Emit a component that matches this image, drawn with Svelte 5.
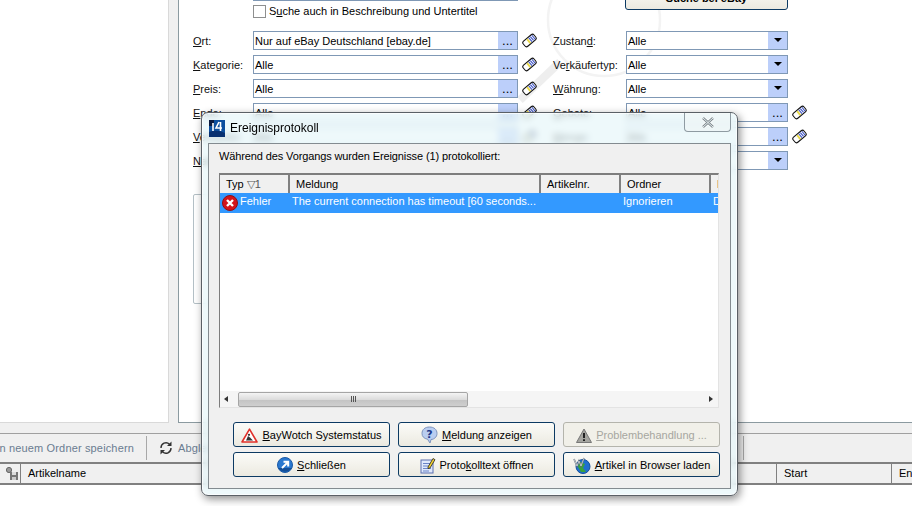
<script>
  // form rows: label split around the underlined access key
  const rows = [
    { l: ["", "O", "rt:"], v: "Nur auf eBay Deutschland [ebay.de]", r: ["Zustan", "d", ":"], rv: "Alle", rt: "drop" },
    { l: ["", "K", "ategorie:"], v: "Alle", r: ["Ve", "r", "käufertyp:"], rv: "Alle", rt: "drop" },
    { l: ["", "P", "reis:"], v: "Alle", r: ["", "W", "ährung:"], rv: "Alle", rt: "drop" },
    { l: ["", "E", "nde:"], v: "Alle", r: ["", "G", "ebote:"], rv: "Alle", rt: "more" },
    { l: ["", "V", "erkäufer:"], v: "Alle", r: ["", "M", "enge:"], rv: "Alle", rt: "more" },
    { l: ["", "N", "ame:"], v: "Alle", r: ["", "S", "tatus:"], rv: "Alle", rt: "drop" }
  ];

  const columns = [
    { name: "Typ", w: 70 },
    { name: "Meldung", w: 251 },
    { name: "Artikelnr.", w: 80 },
    { name: "Ordner", w: 90 },
    { name: "Datei", w: 40 }
  ];
</script>

{#snippet eraser()}
  <svg class="eraser" width="15" height="15" viewBox="0 0 15 15">
    <g transform="rotate(-40 7.5 7.5)">
      <rect x="0.5" y="4.2" width="14" height="6.6" rx="2" fill="#fff" stroke="#111" stroke-width="1.1" />
      <rect x="5.5" y="5" width="2" height="5" fill="#e8d84a" />
      <path d="M8.7 5 V10 M10.7 5 V10 M12.7 5 V10" stroke="#3f55c8" stroke-width="1.1" />
    </g>
  </svg>
{/snippet}

{#snippet key(parts)}
  <span class="lbl">{parts[0]}<u>{parts[1]}</u>{parts[2]}</span>
{/snippet}

{#snippet field(value, type)}
  <div class="field">
    <span class="val">{value}</span>
    {#if type === "more"}
      <span class="side dots">...</span>
    {:else}
      <span class="side"><i class="tri"></i></span>
    {/if}
  </div>
{/snippet}

<div class="page">
  <div class="top">
    <div class="leftpane"></div>
    <div class="main">
      <svg class="swirl" width="180" height="110" viewBox="0 0 180 110">
        <circle cx="95" cy="20" r="56" fill="none" stroke="#f3f3f3" stroke-width="2.5" />
        <path d="M11 100 L51 62" stroke="#eeeeee" stroke-width="8" />
      </svg>
      <div class="head">
        <div class="headleft">
          <div class="field topfield"></div>
          <label class="check"><span class="box"></span><span>S<u>u</u>che auch in Beschreibung und Untertitel</span></label>
        </div>
        <button class="btn searchbtn"><b>Suche bei eBay</b></button>
      </div>
      <div class="form">
        {#each rows as row}
          {@render key(row.l)}
          {@render field(row.v, "more")}
          <div class="mid">{@render eraser()}</div>
          {@render key(row.r)}
          {@render field(row.rv, row.rt)}
          <div class="end">{#if row.rt === "more"}{@render eraser()}{/if}</div>
        {/each}
      </div>
      <div class="group"></div>
    </div>
  </div>

  <div class="strip"></div>

  <div class="toolbar">
    <div class="first"><span class="tool">Suche in neuem Ordner speichern</span></div>
    <span class="sep"></span>
    <svg class="sync" width="16" height="16" viewBox="0 0 16 16">
      <path d="M3 8 A5 5 0 0 1 11.5 4.2" fill="none" stroke="#333" stroke-width="1.4" />
      <path d="M13 8 A5 5 0 0 1 4.5 11.8" fill="none" stroke="#333" stroke-width="1.4" />
      <path d="M13.5 1.5 L13.5 6 L9 6 Z" fill="#333" />
      <path d="M2.5 14.5 L2.5 10 L7 10 Z" fill="#333" />
    </svg>
    <span class="tool">Abgleich</span>
    <span class="grow"></span>
    <span class="sep"></span>
    <span class="tailgap"></span>
  </div>

  <div class="listhead">
    <div class="hc iconcell">
      <svg width="14" height="15" viewBox="0 0 14 15">
        <circle cx="4" cy="4" r="2.6" fill="#9a9a9a" stroke="#666" />
        <rect x="5" y="6" width="8" height="8" fill="#777" />
        <rect x="7" y="6" width="4" height="3" fill="#ddd" />
        <rect x="7" y="11" width="4" height="3" fill="#ccc" />
      </svg>
    </div>
    <div class="hc namecell">Artikelname</div>
    <div class="hc startcell">Start</div>
    <div class="hc">Ende</div>
  </div>

  <div class="dialog">
    <div class="titlebar">
      <svg class="appicon" width="16" height="17" viewBox="0 0 16 17">
        <rect width="16" height="17" fill="#0d4f9e" />
        <path d="M0 17 L0 12 Q8 9 16 13 L16 17 Z" fill="#083070" />
        <path d="M0 0 H5 V6 H0 Z" fill="#0a1a40" />
        <path d="M4 3 V11 M10 2 L7 8 H13 M11.5 2 V11" stroke="#fff" stroke-width="1.6" fill="none" />
      </svg>
      <span class="title">Ereignisprotokoll</span>
      <span class="close">
        <svg width="14" height="11" viewBox="0 0 14 11">
          <path d="M2 1 L12 10 M12 1 L2 10" stroke="#fff" stroke-width="4" />
          <path d="M2 1 L12 10 M12 1 L2 10" stroke="#7f8b90" stroke-width="2.6" />
          <path d="M2 1 L12 10 M12 1 L2 10" stroke="#e6ecee" stroke-width="1" />
        </svg>
      </span>
    </div>
    <div class="panel">
      <p class="msg">Während des Vorgangs wurden Ereignisse (1) protokolliert:</p>
      <div class="list">
        <div class="lhead">
          {#each columns as c, i}
            <div class="lh" style="width:{c.w}px">
              {c.name}{#if i === 0}<span class="sort">▽1</span>{/if}
            </div>
          {/each}
        </div>
        <div class="lrow">
          <div class="lc" style="width:70px">
            <svg width="16" height="16" viewBox="0 0 16 16">
              <circle cx="8" cy="8" r="7.5" fill="#d2141c" stroke="#8e1016" />
              <path d="M5 5 L11 11 M11 5 L5 11" stroke="#fff" stroke-width="2.4" />
            </svg>
            <span>Fehler</span>
          </div>
          <div class="lc" style="width:251px"><span class="clip">The current connection has timeout [60 seconds...</span></div>
          <div class="lc" style="width:80px"></div>
          <div class="lc" style="width:90px">Ignorieren</div>
          <div class="lc" style="width:40px">D</div>
        </div>
        <div class="lbody"></div>
        <div class="hscroll">
          <span class="arrow left"></span>
          <div class="track"><div class="thumb"><i></i><i></i><i></i></div></div>
          <span class="arrow right"></span>
        </div>
      </div>
      <div class="actions">
        <button class="btn">
          <svg width="17" height="15" viewBox="0 0 17 15">
            <path d="M8.5 1.2 L16 14 H1 Z" fill="#fff" stroke="#e0312a" stroke-width="1.6" stroke-linejoin="round" />
            <path d="M5 12.5 L7 8 L9 9.5 L12 12.5 Z" fill="#333" />
            <circle cx="8" cy="6.8" r="1.1" fill="#333" />
          </svg>
          <span><u>B</u>ayWotch Systemstatus</span>
        </button>
        <button class="btn">
          <svg width="17" height="18" viewBox="0 0 17 18">
            <path d="M8.5 1 C13 1 16 3.5 16 7.5 C16 11 13 13.5 10 13.5 L9 17 L6.5 13.2 C3 12.6 1 10.5 1 7.5 C1 3.5 4 1 8.5 1 Z" fill="#b9cdf0" stroke="#7d93bd" />
            <text x="8.5" y="11.5" class="q">?</text>
          </svg>
          <span><u>M</u>eldung anzeigen</span>
        </button>
        <button class="btn off">
          <svg width="16" height="15" viewBox="0 0 16 15">
            <path d="M8 1 L15.5 14.5 H0.5 Z" fill="#a5a5a0" stroke="#777" />
            <path d="M8 5 V10 M8 11.2 V13" stroke="#222" stroke-width="2" />
          </svg>
          <span><u>P</u>roblembehandlung ...</span>
        </button>
        <button class="btn">
          <svg width="16" height="16" viewBox="0 0 16 16">
            <circle cx="8" cy="8" r="7.5" fill="#2a78cf" stroke="#1c5aa6" />
            <path d="M1.5 11 A7.5 7.5 0 0 0 14.5 11 Z" fill="#144f98" />
            <path d="M5 11 L10.5 5.5 M6.5 4.8 H11.2 V9.5" stroke="#fff" stroke-width="2" fill="none" />
          </svg>
          <span><u>S</u>chließen</span>
        </button>
        <button class="btn">
          <svg width="16" height="17" viewBox="0 0 16 17">
            <rect x="1" y="3" width="12" height="13" fill="#dfe8fb" stroke="#5a6fb0" />
            <path d="M3 6.5 H11 M3 9 H11 M3 11.5 H11 M3 14 H9" stroke="#6a84c8" />
            <path d="M8 10 L13 1.5 L15 2.7 L10 11 L8 11.5 Z" fill="#f3d230" stroke="#222" stroke-width=".8" />
          </svg>
          <span>Proto<u>k</u>olltext öffnen</span>
        </button>
        <button class="btn">
          <svg width="18" height="17" viewBox="0 0 18 17">
            <circle cx="10" cy="9.5" r="7" fill="#1f6fd0" stroke="#15509a" />
            <path d="M6 4 L12 7 L10 11 L13 15 L8 15 L5 10 Z" fill="#3aa23c" />
            <path d="M1 2 L4 9 L6 4 L8 9 L11 1" fill="none" stroke="#5c6a78" stroke-width="1.6" />
            <path d="M1 2 L4 9 L6 4 L8 9 L11 1" fill="none" stroke="#fff" stroke-width=".6" />
          </svg>
          <span><u>A</u>rtikel in Browser laden</span>
        </button>
      </div>
    </div>
  </div>
</div>

<style>
  :global(body) {
    margin: 0;
    background: #fff;
  }

  .page {
    position: relative;
    width: 912px;
    height: 506px;
    overflow: hidden;
    display: flex;
    flex-direction: column;
    background: #fff;
    color: #000;
    font: 11px/13px "Liberation Sans", sans-serif;
  }

  u {
    text-decoration: underline;
  }

  /* upper area */
  .top {
    height: 423px;
    flex: none;
    display: flex;
    background: #f0f0f0;
  }

  .leftpane {
    width: 169px;
    background: #fff;
    border-right: 1px solid #d9d9d9;
    border-bottom: 1px solid #d9d9d9;
    box-sizing: border-box;
  }

  .main {
    position: relative;
    margin-left: 9px;
    flex: 1;
    background: #fff;
    border-left: 1px solid #8b9aa0;
    border-bottom: 1px solid #8b9aa0;
    padding-left: 14px;
    overflow: hidden;
  }

  .swirl {
    position: absolute;
    left: 330px;
    top: 0;
  }

  .head {
    position: relative;
    display: flex;
    height: 31px;
  }

  .headleft {
    width: 325px;
  }

  .topfield {
    margin: -18px 0 0 60px;
    box-sizing: border-box;
    width: 265px;
  }

  .check {
    display: flex;
    align-items: center;
    gap: 3px;
    margin: 4px 0 0 60px;
  }

  .box {
    width: 11px;
    height: 11px;
    border: 1px solid #8e8f8f;
    background: #fff;
  }

  .searchbtn {
    width: 163px;
    height: 25px;
    margin: -15px 0 0 107px;
  }

  .form {
    position: relative;
    display: grid;
    grid-template-columns: 60px 265px 35px 73px 162px 20px;
    grid-auto-rows: 19px;
    row-gap: 5px;
    align-items: center;
  }

  .lbl {
    color: #111;
    padding-top: 1px;
  }

  .field {
    display: flex;
    height: 19px;
    box-sizing: border-box;
    border: 1px solid #7f98b5;
    background: #fff;
  }

  .val {
    flex: 1;
    padding-left: 1px;
    line-height: 18px;
    white-space: nowrap;
    overflow: hidden;
  }

  .side {
    width: 19px;
    background: #bccffa;
    display: flex;
    align-items: center;
    justify-content: center;
  }

  .dots {
    align-items: flex-end;
    line-height: 13px;
    padding-bottom: 2px;
    box-sizing: border-box;
    font-size: 13px;
  }

  .tri {
    width: 0;
    height: 0;
    margin-bottom: 2px;
    border: 4px solid transparent;
    border-top: 4px solid #000;
    border-bottom: 0;
  }

  .mid {
    padding-left: 4px;
    height: 15px;
  }

  .end {
    padding-left: 4px;
    height: 15px;
  }

  .eraser {
    display: block;
  }

  .group {
    position: relative;
    margin: 24px 0 0 0;
    width: 500px;
    height: 108px;
    border: 1px solid #b4c0c6;
    border-radius: 2px;
  }

  /* bottom bars */
  .strip {
    height: 10px;
    flex: none;
    background: #f0f0f0;
    border-bottom: 1px solid #a0a0a0;
  }

  .toolbar {
    height: 28px;
    flex: none;
    display: flex;
    align-items: center;
    background: #f0f0f0;
  }

  .tool {
    color: #6a7c91;
    white-space: nowrap;
    letter-spacing: 0.15px;
  }

  .first {
    width: 134px;
    margin-right: 1px;
    flex: none;
    display: flex;
    justify-content: flex-end;
  }

  .sep {
    width: 1px;
    height: 24px;
    margin: 0 11px 0 11px;
    background: #a8a8a8;
    flex: none;
  }

  .sync {
    margin-right: 4px;
    flex: none;
  }

  .grow {
    flex: 1;
  }

  .tailgap {
    width: 157px;
    flex: none;
  }

  .listhead {
    height: 23px;
    flex: none;
    box-sizing: border-box;
    display: flex;
    background: #f0f0f0;
    border-top: 2px solid #808080;
    border-bottom: 2px solid #808080;
  }

  .hc {
    line-height: 19px;
    padding-left: 7px;
    white-space: nowrap;
  }

  .iconcell {
    width: 15px;
    flex: none;
    border-right: 1px solid #808080;
    display: flex;
    align-items: center;
    padding-left: 5px;
    margin-left: 0;
  }

  .namecell {
    width: 748px;
    flex: none;
    border-right: 1px solid #808080;
  }

  .startcell {
    width: 107px;
    flex: none;
    border-right: 1px solid #808080;
  }

  /* dialog */
  .dialog {
    position: absolute;
    left: 201px;
    top: 112px;
    width: 537px;
    height: 384px;
    box-sizing: border-box;
    display: flex;
    flex-direction: column;
    padding: 0 6px 6px;
    border: 1px solid #5a6066;
    border-radius: 7px;
    background: rgba(232, 246, 250, 0.72);
    backdrop-filter: blur(3px);
    box-shadow: 2px 3px 9px rgba(0, 0, 0, 0.45), inset 0 0 0 1px rgba(255, 255, 255, 0.7);
  }

  .titlebar {
    height: 30px;
    flex: none;
    display: flex;
    align-items: center;
    gap: 5px;
    position: relative;
  }

  .appicon {
    margin: 0 0 0 1px;
  }

  .title {
    font-size: 12px;
  }

  .close {
    position: absolute;
    right: 0;
    top: 0;
    width: 47px;
    height: 19px;
    box-sizing: border-box;
    display: flex;
    align-items: center;
    justify-content: center;
    border: 1px solid #8f9ba2;
    border-top: 0;
    border-radius: 0 0 4px 4px;
    background: rgba(240, 246, 246, 0.6);
  }

  .panel {
    flex: 1;
    display: flex;
    flex-direction: column;
    background: #f0f0f0;
    border: 1px solid #838b90;
    padding: 0 10px 10px;
    min-height: 0;
  }

  .msg {
    margin: 0;
    height: 29px;
    line-height: 24px;
    white-space: nowrap;
    letter-spacing: -0.12px;
  }

  .list {
    height: 235px;
    margin-right: 1px;
    box-sizing: border-box;
    flex: none;
    display: flex;
    flex-direction: column;
    background: #fff;
    border-top: 2px solid #7d7d7d;
    border-left: 1px solid #7d7d7d;
    border-right: 1px solid #e3e3e3;
    border-bottom: 1px solid #e3e3e3;
    overflow: hidden;
  }

  .lhead {
    display: flex;
    height: 18px;
    flex: none;
    background: #f0f0f0;
  }

  .lh {
    flex: none;
    box-sizing: border-box;
    padding: 1px 0 0 6px;
    line-height: 17px;
    white-space: nowrap;
    overflow: hidden;
    border-right: 2px solid #808080;
  }

  .sort {
    margin-left: 3px;
    color: #555;
  }

  .lrow {
    display: flex;
    height: 20px;
    flex: none;
    background: #3399ff;
    color: #fff;
  }

  .lc {
    flex: none;
    box-sizing: border-box;
    padding-left: 2px;
    padding-bottom: 3px;
    display: flex;
    align-items: center;
    gap: 2px;
    white-space: nowrap;
    overflow: hidden;
  }

  .lc svg {
    margin-bottom: -3px;
  }

  .clip {
    overflow: hidden;
  }

  .lbody {
    flex: 1;
  }

  .hscroll {
    height: 16px;
    flex: none;
    display: flex;
    align-items: center;
    background: #f5f5f5;
  }

  .arrow {
    width: 0;
    height: 0;
    flex: none;
    border: 3px solid transparent;
  }

  .arrow.left {
    margin: 0 10px 0 4px;
    border-right: 4px solid #333;
    border-left: 0;
  }

  .arrow.right {
    margin: 0 5px 0 6px;
    border-left: 4px solid #333;
    border-right: 0;
  }

  .track {
    flex: 1;
    height: 15px;
  }

  .thumb {
    width: 230px;
    height: 15px;
    box-sizing: border-box;
    border: 1px solid #a5a5a5;
    border-radius: 2px;
    background: linear-gradient(#f4f4f4, #dcdcdc 50%, #c4c4c4 55%, #cfcfcf);
    display: flex;
    gap: 1px;
    align-items: center;
    justify-content: center;
  }

  .thumb i {
    width: 1px;
    height: 6px;
    background: #555;
  }

  .actions {
    display: grid;
    grid-template-columns: repeat(3, 157px);
    grid-auto-rows: 25px;
    column-gap: 8px;
    row-gap: 5px;
    margin: 14px 0 0 14px;
  }

  .btn {
    display: flex;
    align-items: center;
    justify-content: center;
    gap: 4px;
    padding: 1px 0 0;
    box-sizing: border-box;
    border: 1px solid #0c3a63;
    border-radius: 3px;
    background: linear-gradient(#fbfbf8, #f2f1ea 60%, #ebe9e0);
    font: inherit;
    color: #000;
  }

  .btn.off {
    color: #a6a6a0;
    border-color: #b4b4ac;
    background: #f1f0e9;
  }

  .q {
    font: bold 11px "DejaVu Sans", sans-serif;
    text-anchor: middle;
    fill: #1d3a8a;
  }
</style>
